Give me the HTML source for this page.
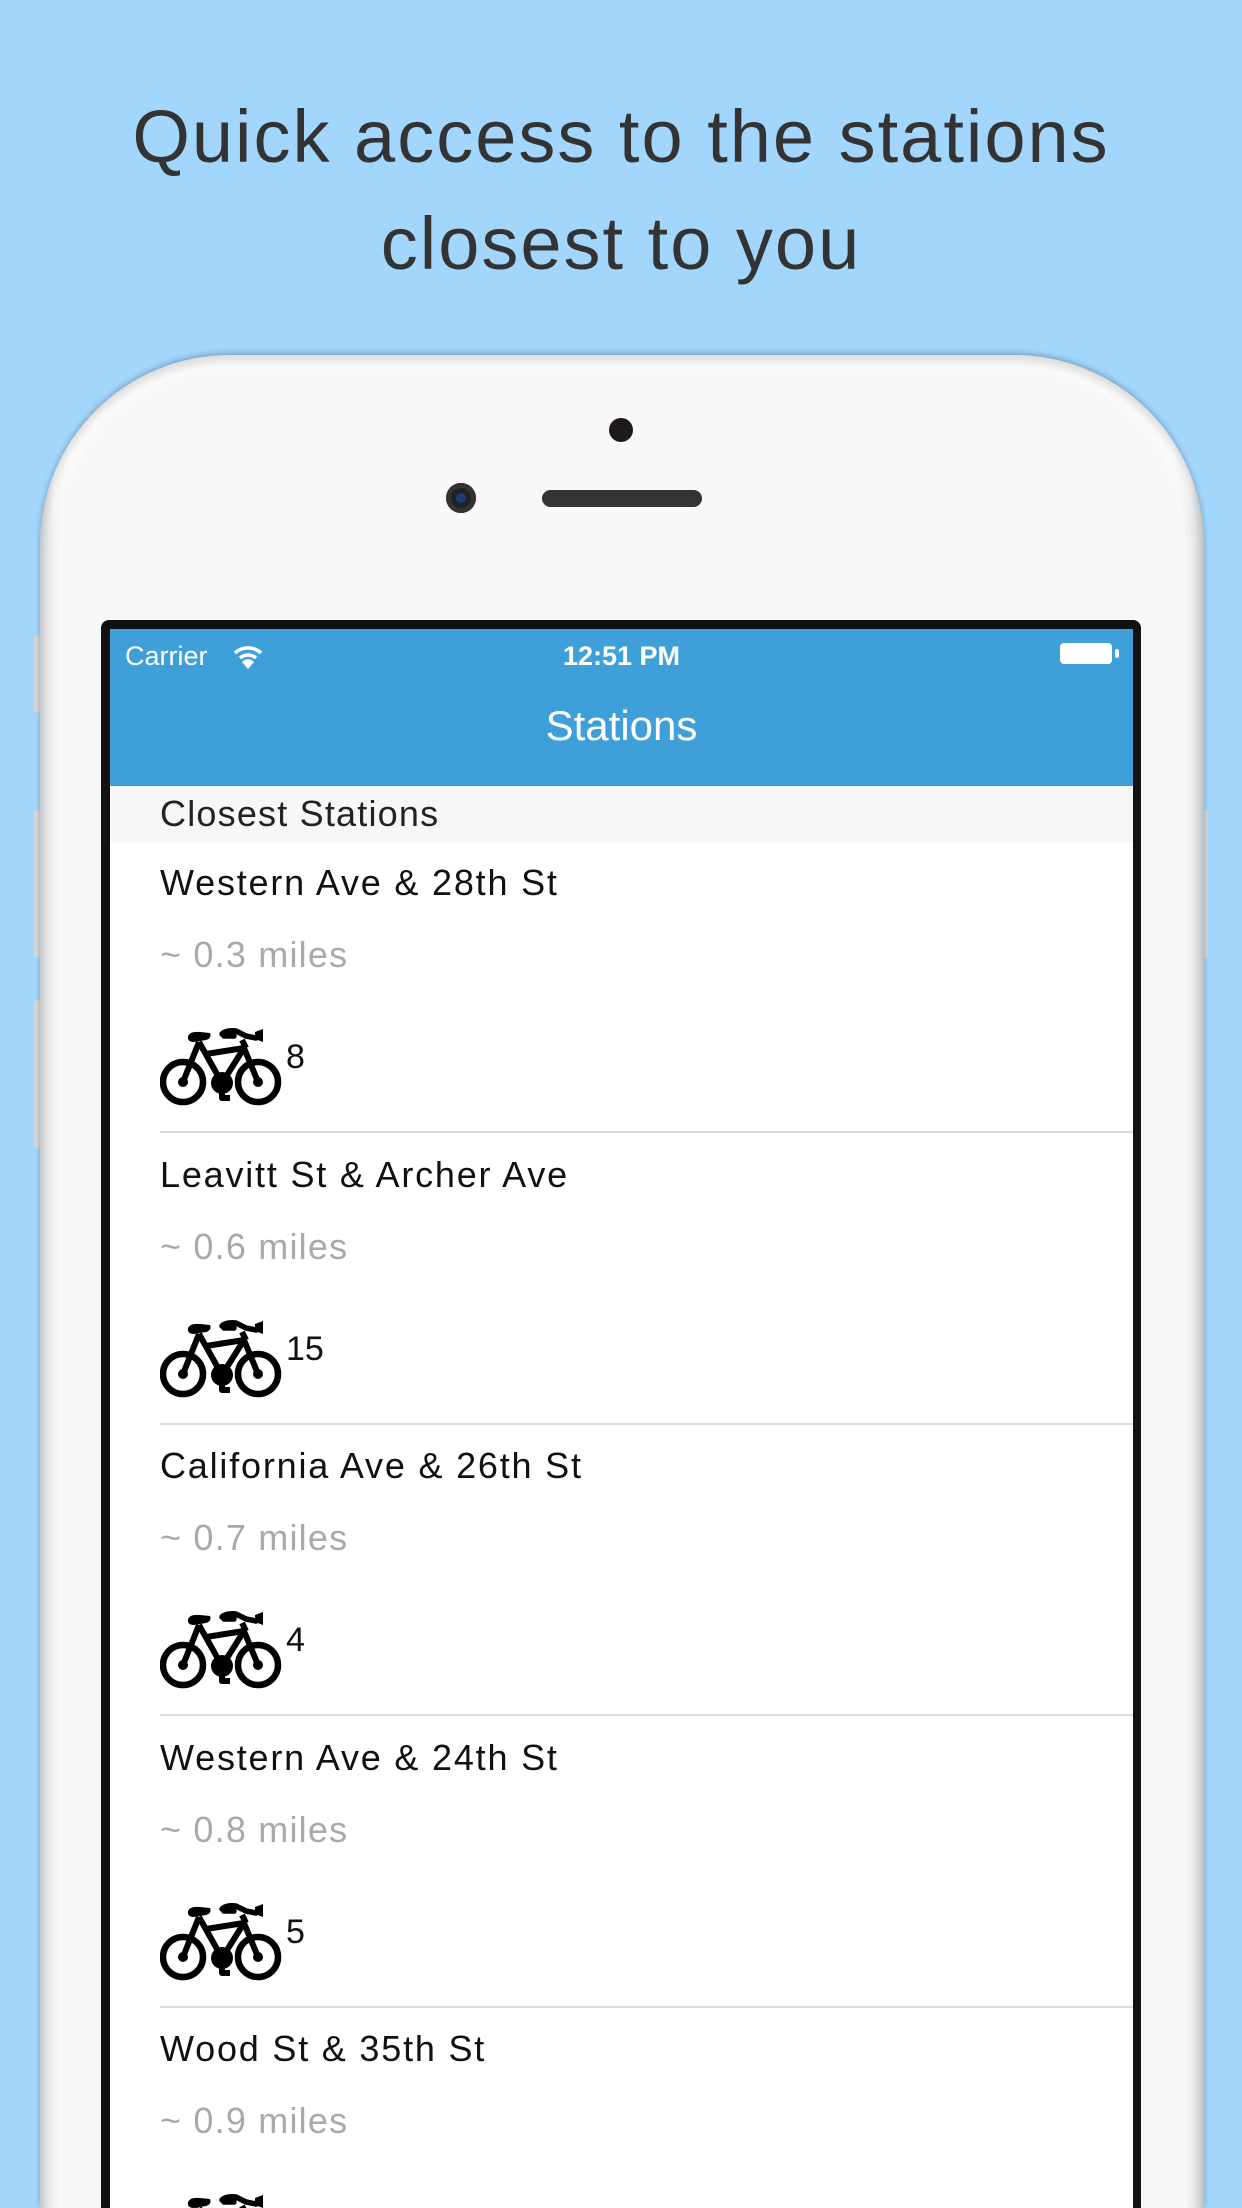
<!DOCTYPE html>
<html><head><meta charset="utf-8"><style>
html,body{margin:0;padding:0;width:1242px;height:2208px;overflow:hidden}
body{background:#a3d6fd;position:relative;font-family:"Liberation Sans",sans-serif}
.h{position:absolute;left:0;width:1242px;text-align:center;color:#333;font-size:74px;line-height:80px;letter-spacing:2px}
.phone{position:absolute;left:40px;top:355px;width:1164px;height:1853px;border-radius:190px 190px 0 0;background:linear-gradient(90deg,#cfd1d4 0,#f4f4f5 14px,#fafafa 30px,#fafafa 1134px,#f0f0f1 1150px,#c8cacd 1164px);box-shadow:0 -2px 6px rgba(0,0,0,.25), inset 0 6px 8px rgba(0,0,0,.12)}
.face{position:absolute;left:18px;top:14px;right:18px;bottom:0;border-radius:175px 175px 0 0;background:#f8f8f8}
.btn{position:absolute;width:6px;background:#d6d8da;border-radius:3px}
.screen{position:absolute;left:101px;top:620px;width:1040px;height:1588px;background:#111;border-radius:8px 8px 0 0}
.inner{position:absolute;left:110px;top:629px;width:1023px;height:1579px;background:#fff;overflow:hidden}
.nav{position:absolute;left:0;top:0;width:1023px;height:157px;background:#3fa0d9;color:#fff}
.sec{position:absolute;left:0;top:157px;width:1023px;height:56px;background:#f7f7f7}
.t{position:absolute;left:50px;font-size:36px;color:#111;white-space:nowrap;letter-spacing:1.8px}
.d{position:absolute;left:50px;font-size:36px;color:#a9a9a9;white-space:nowrap;letter-spacing:1.2px}
.sep{position:absolute;left:50px;right:0;height:2px;background:#ddd}
.n{position:absolute;left:176px;font-size:34px;color:#111}
.bk{position:absolute;left:50px;width:128px;height:78px}
</style></head><body>
<div class="h" style="top:97px">Quick access to the stations</div>
<div class="h" style="top:204px">closest to you</div>
<div class="btn" style="left:34px;top:635px;height:78px"></div>
<div class="btn" style="left:34px;top:810px;height:148px"></div>
<div class="btn" style="left:34px;top:1000px;height:148px"></div>
<div class="btn" style="left:1202px;top:810px;height:148px"></div>
<div class="phone"><div class="face"></div></div>
<div style="position:absolute;left:609px;top:418px;width:24px;height:24px;border-radius:50%;background:#1e1a1a"></div>
<div style="position:absolute;left:446px;top:483px;width:30px;height:30px;border-radius:50%;background:#222;box-shadow:inset 0 0 0 5px #333"><div style="position:absolute;left:10px;top:10px;width:10px;height:10px;border-radius:50%;background:#1b3d7a"></div></div>
<div style="position:absolute;left:542px;top:490px;width:160px;height:17px;border-radius:9px;background:#333"></div>
<div class="screen"></div>
<div class="inner">
 <div class="nav">
  <div style="position:absolute;left:15px;top:12px;font-size:27px">Carrier</div>
  <svg style="position:absolute;left:122px;top:15px" width="32" height="26" viewBox="0 0 32 26"><path d="M3 9 A19 19 0 0 1 29 9" stroke="#fff" stroke-width="3.5" fill="none"/><path d="M8 14 A12 12 0 0 1 24 14" stroke="#fff" stroke-width="3.5" fill="none"/><path d="M16 25 L10 18 A8 8 0 0 1 22 18 Z" fill="#fff"/></svg>
  <div style="position:absolute;left:0;width:1023px;top:12px;text-align:center;font-size:27px;font-weight:bold">12:51 PM</div>
  <div style="position:absolute;left:950px;top:14px;width:52px;height:21px;border-radius:4px;background:#fff"></div>
  <div style="position:absolute;left:1005px;top:20px;width:4px;height:9px;border-radius:2px;background:#fff"></div>
  <div style="position:absolute;left:0;width:1023px;top:73px;text-align:center;font-size:42px">Stations</div>
 </div>
 <div class="sec"><div class="t" style="top:7px;color:#222;letter-spacing:1.2px">Closest Stations</div></div>
 <svg width="0" height="0" style="position:absolute"><defs><g id="bike">
  <circle cx="23" cy="54" r="20" stroke="#000" stroke-width="6.5" fill="none"/>
  <circle cx="23" cy="54" r="5" fill="#000"/>
  <circle cx="98" cy="54" r="20" stroke="#000" stroke-width="6.5" fill="none"/>
  <circle cx="98" cy="54" r="5" fill="#000"/>
  <circle cx="62" cy="55" r="11" fill="#000"/>
  <path d="M39 14 L62 55 L84 20 L46 26 M84 20 L98 54 M39 14 L23 54 M82 12 L86 20 M62 55 L62 70 L70 70" stroke="#000" stroke-width="6" fill="none" stroke-linejoin="round"/>
  <path d="M28 8 Q30 3 40 4 L50 5 Q52 10 46 12 L34 14 Q27 14 28 8 Z" fill="#000"/>
  <path d="M62 6 Q66 2 76 3 L86 8 L96 10 M64 8 L74 8" stroke="#000" stroke-width="5.5" fill="none" stroke-linecap="round"/>
  <path d="M95 4 L103 1 L103 14 L95 11 Z" fill="#000"/>
 </g></defs></svg>
 <div style="position:absolute;left:0;top:213px;width:1023px">
  <div class="t" style="top:20px">Western Ave &amp; 28th St</div>
  <div class="d" style="top:92px">~ 0.3 miles</div>
  <svg class="bk" style="top:186px" viewBox="0 0 128 78"><use href="#bike"/></svg>
  <div class="n" style="top:196px">8</div>
  <div class="sep" style="top:289px"></div>
 </div>
 <div style="position:absolute;left:0;top:504.5px;width:1023px">
  <div class="t" style="top:20px">Leavitt St &amp; Archer Ave</div>
  <div class="d" style="top:92px">~ 0.6 miles</div>
  <svg class="bk" style="top:186px" viewBox="0 0 128 78"><use href="#bike"/></svg>
  <div class="n" style="top:196px">15</div>
  <div class="sep" style="top:289px"></div>
 </div>
 <div style="position:absolute;left:0;top:796px;width:1023px">
  <div class="t" style="top:20px">California Ave &amp; 26th St</div>
  <div class="d" style="top:92px">~ 0.7 miles</div>
  <svg class="bk" style="top:186px" viewBox="0 0 128 78"><use href="#bike"/></svg>
  <div class="n" style="top:196px">4</div>
  <div class="sep" style="top:289px"></div>
 </div>
 <div style="position:absolute;left:0;top:1087.5px;width:1023px">
  <div class="t" style="top:20px">Western Ave &amp; 24th St</div>
  <div class="d" style="top:92px">~ 0.8 miles</div>
  <svg class="bk" style="top:186px" viewBox="0 0 128 78"><use href="#bike"/></svg>
  <div class="n" style="top:196px">5</div>
  <div class="sep" style="top:289px"></div>
 </div>
 <div style="position:absolute;left:0;top:1379px;width:1023px">
  <div class="t" style="top:20px">Wood St &amp; 35th St</div>
  <div class="d" style="top:92px">~ 0.9 miles</div>
  <svg class="bk" style="top:186px" viewBox="0 0 128 78"><use href="#bike"/></svg>
 </div>
</div>
</body></html>
